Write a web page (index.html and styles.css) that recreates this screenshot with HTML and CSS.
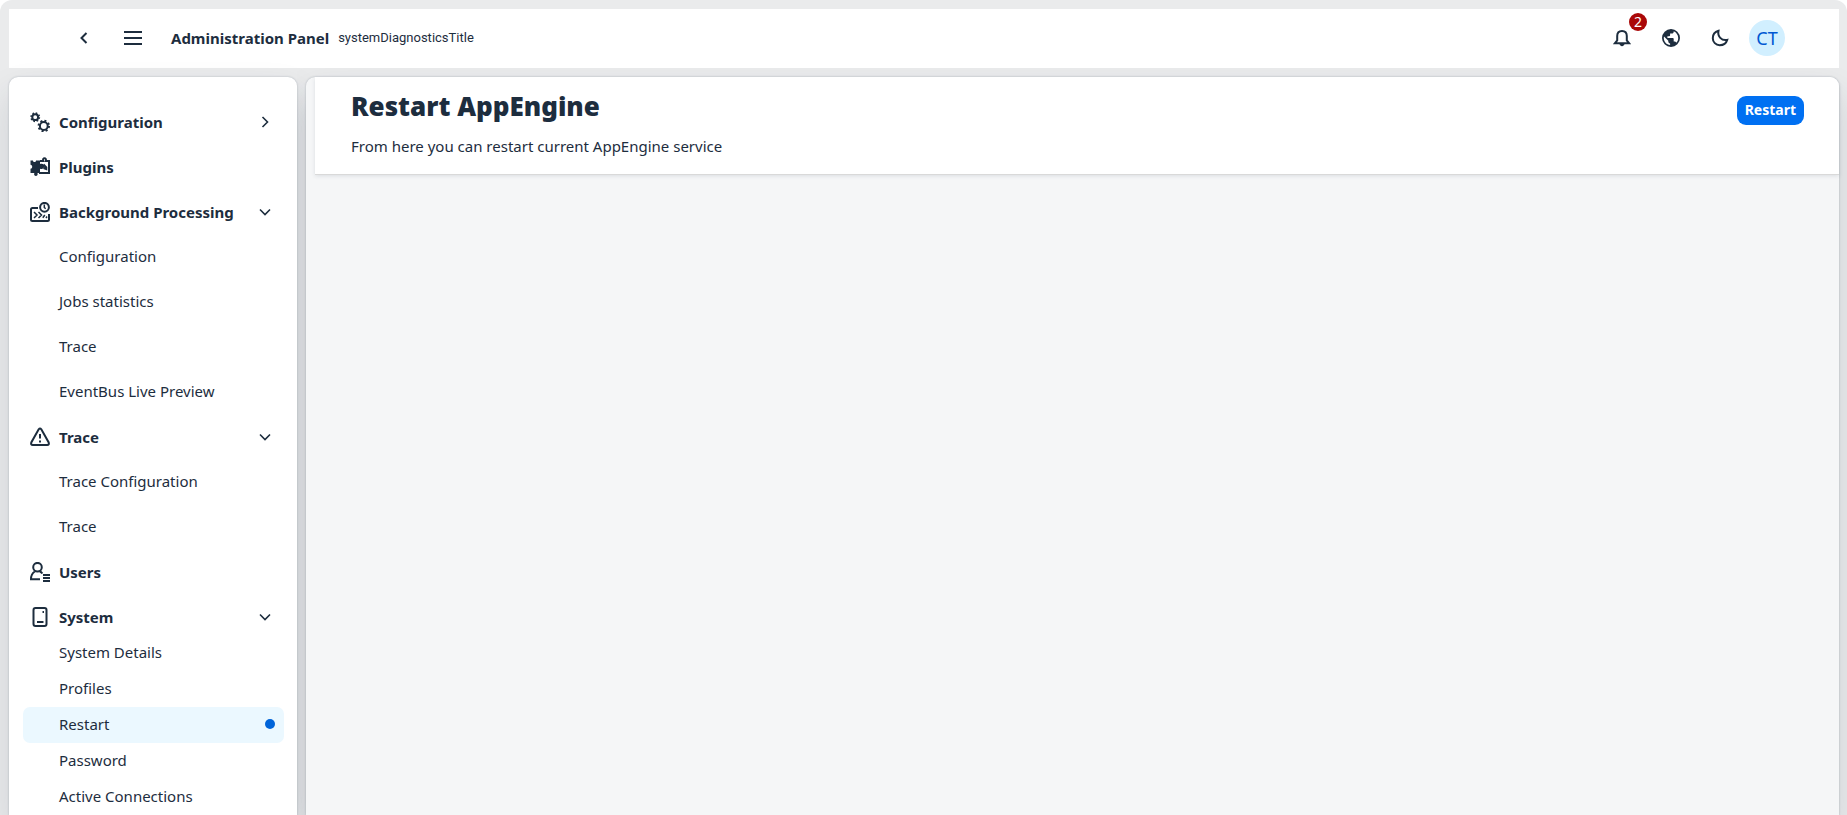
FILE: index.html
```html
<!DOCTYPE html>
<html lang="en">
<head>
<meta charset="utf-8">
<meta name="viewport" content="width=device-width, initial-scale=1">
<title>Administration Panel</title>
<link rel="stylesheet" href="styles.css">
</head>
<body>
<div class="shell">
  <header class="topbar">
    <button class="icon-btn back" aria-label="Back"><svg width="20" height="20" viewBox="0 0 20 20"><path d="M12.500 5 7.500 10l5 5"/></svg></button>
    <button class="icon-btn menu" aria-label="Menu"><svg width="20" height="20" viewBox="0 0 20 20"><path d="M1 4h18M1 10h18M1 16h18"/></svg></button>
    <strong class="brand">Administration Panel</strong>
    <span class="brand-sub">systemDiagnosticsTitle</span>
    <div class="actions">
      <button class="icon-btn bell" aria-label="Notifications"><svg width="18" height="18" viewBox="0 0 18 18"><path d="M2 14.200h14L13.800 11.500V7C13.800 4 12 2 9 2S4.200 4 4.200 7v4.500z"/><path class="solid" d="M6.500 15h5c-.3 1.300-1.300 2.200-2.500 2.200S6.800 16.300 6.500 15z"/></svg><span class="badge">2</span></button>
      <button class="icon-btn" aria-label="Language"><svg width="20" height="20" viewBox="0 0 20 20"><path class="solid" fill-rule="evenodd" d="M10 1a9 9 0 1 0 0 18 9 9 0 0 0 0-18zm-.9 16.100C5.500 16.700 2.800 13.700 2.800 10c0-.6.100-1.100.2-1.600l4.300 4.300v.9c0 1 .8 1.800 1.800 1.800zm6.200-2.300c-.2-.7-.9-1.300-1.700-1.300h-.9v-2.700c0-.5-.4-.9-.9-.9H6.400V8.200h1.800c.5 0 .9-.4.900-.9V5.500h1.800c1 0 1.800-.8 1.800-1.800v-.4c2.600 1.100 4.500 3.700 4.500 6.700 0 1.900-.7 3.600-1.900 4.800z"/></svg></button>
      <button class="icon-btn" aria-label="Dark mode"><svg width="18" height="18" viewBox="0 0 18 18"><path d="M7.500 1.800C3.900 2.800 1.800 5.800 1.800 9.200c0 3.900 3 7 6.900 7 3.400 0 6.500-1.900 7.500-5.300C10.500 12 6.300 7.500 7.500 1.800z"/></svg></button>
      <button class="avatar" aria-label="Profile">CT</button>
    </div>
  </header>
  <div class="body">
    <nav class="sidebar" aria-label="Administration">
      <ul class="nav">
        <li><a class="item group" href="#"><svg width="20" height="20" viewBox="0 0 20 20"><circle cx="5.200" cy="5.200" r="2.900"/><circle class="teeth small" cx="5.200" cy="5.200" r="4.200"/><circle cx="13.800" cy="14" r="3.900"/><circle class="teeth" cx="13.800" cy="14" r="5.200"/></svg><span>Configuration</span><svg class="chev" width="12" height="12" viewBox="0 0 12 12"><path d="M3.500 1 8.500 6l-5 5"/></svg></a></li>
        <li><a class="item group" href="#"><svg width="20" height="20" viewBox="0 0 20 20"><path class="solid" d="M.5 3.500H3c0 2 3 2 3 0h4v3.600c2.400-1 4.200.3 4.200 2.200s-1.800 3.300-4.200 2.400V16H7.500c.6 2.200-.5 3-1.600 3s-2.300-.8-1.600-3H.5v-4.200c2.300 0 2.300-4 0-4z"/><path d="M10 4h3.200c-.5-2 .4-2.800 1.300-2.800s1.800.8 1.300 2.800H19v12H9M13.500 7.500l2.800 3v1.500l-2.800-1"/></svg><span>Plugins</span></a></li>
        <li><a class="item group" href="#"><svg width="20" height="20" viewBox="0 0 20 20"><path d="M8 6H2.500Q1 6 1 7.500v10Q1 19 2.500 19h15q1.500 0 1.500-1.500V12"/><circle cx="14.500" cy="5.300" r="4.400"/><path class="fine" d="M14.300 2.500v3l1.400 1.300M4 10l3 3-3 3M8.500 10l3 3-3 3M12.800 15.800l2-2.800M16 16l1-1.500"/></svg><span>Background Processing</span><svg class="chev" width="12" height="12" viewBox="0 0 12 12"><path d="m1 3.500 5 5 5-5"/></svg></a>
          <ul class="sub">
            <li><a class="item" href="#">Configuration</a></li>
            <li><a class="item" href="#">Jobs statistics</a></li>
            <li><a class="item" href="#">Trace</a></li>
            <li><a class="item" href="#">EventBus Live Preview</a></li>
          </ul></li>
        <li><a class="item group" href="#"><svg width="20" height="20" viewBox="0 0 20 20"><path d="M8.700 2.300q1.300-1.600 2.600 0l7.400 13.200q.7 2.500-1.500 2.500H2.800q-2.200 0-1.500-2.500z"/><path d="M10 7v4.500M10 13.500v2"/></svg><span>Trace</span><svg class="chev" width="12" height="12" viewBox="0 0 12 12"><path d="m1 3.500 5 5 5-5"/></svg></a>
          <ul class="sub">
            <li><a class="item" href="#">Trace Configuration</a></li>
            <li><a class="item" href="#">Trace</a></li>
          </ul></li>
        <li><a class="item group" href="#"><svg width="20" height="20" viewBox="0 0 20 20"><circle cx="7.500" cy="5.200" r="4.300"/><path d="M4.800 9.500C2.500 10.800 1 13.500 1 17.300h9M10 9.500c1 .5 1.800 1.200 2.400 2M13 13h7M13 16h7M13 19h7"/></svg><span>Users</span></a></li>
        <li><a class="item group" href="#"><svg width="20" height="20" viewBox="0 0 20 20"><rect x="3.500" y="1" width="13" height="18" rx="2"/><path d="M7 15h6.500M12.500 5H14"/></svg><span>System</span><svg class="chev" width="12" height="12" viewBox="0 0 12 12"><path d="m1 3.500 5 5 5-5"/></svg></a>
          <ul class="sub tight">
            <li><a class="item" href="#">System Details</a></li>
            <li><a class="item" href="#">Profiles</a></li>
            <li><a class="item current" href="#" aria-current="page">Restart</a></li>
            <li><a class="item" href="#">Password</a></li>
            <li><a class="item" href="#">Active Connections</a></li>
          </ul></li>
      </ul>
    </nav>
    <main class="content">
      <section class="page-head">
        <div>
          <h1 class="title">Restart AppEngine</h1>
          <p class="lead">From here you can restart current AppEngine service</p>
        </div>
        <button class="primary">Restart</button>
      </section>
    </main>
  </div>
</div>
</body>
</html>
```
FILE: styles.css
```css
* { box-sizing: border-box; }
html { background: #fff; }
body {
  margin: 0;
  font: 15px/20px "Noto Sans", sans-serif;
  color: #1d2d3e;
}
button { font: inherit; color: inherit; border: 0; padding: 0; background: none; cursor: pointer; }
a { color: inherit; text-decoration: none; }
ul { list-style: none; margin: 0; padding: 0; }
svg { flex: none; display: block; fill: none; stroke: #1d2d3e; stroke-width: 2; }
svg .solid { fill: #1d2d3e; stroke: none; }
svg .fine { stroke-width: 1.500; }
svg .teeth { stroke-dasharray: 2 2.080; }
svg .teeth.small { stroke-width: 1.500; stroke-dasharray: 1.650 1.650; }

.shell {
  height: 100vh;
  display: flex;
  flex-direction: column;
  gap: 9px;
  padding: 9px 8px 0 9px;
  overflow: hidden;
  background: #eaebec;
  border-radius: 12px 12px 0 0;
}
.topbar {
  flex: none;
  height: 59px;
  display: flex;
  align-items: center;
  padding: 0 54px 2px 57px;
  background: #fff;
}
.icon-btn {
  position: relative;
  width: 36px;
  height: 36px;
  display: flex;
  align-items: center;
  justify-content: center;
}
.menu { margin: 0 20px 0 13px; }
.brand-sub { margin-left: 9px; font-family: Roboto, sans-serif; font-size: 13px; }
.actions { margin-left: auto; display: flex; align-items: center; gap: 13px; }
.badge {
  position: absolute;
  left: 25px;
  top: -7px;
  width: 18px;
  height: 18px;
  border-radius: 9px;
  background: #aa0808;
  color: #fff;
  font-size: 14px;
  line-height: 18px;
}
.avatar {
  width: 36px;
  height: 36px;
  margin-left: -2px;
  border-radius: 50%;
  background: #d1efff;
  color: #0057d2;
  font-size: 18px;
}
.body { flex: 1; min-height: 0; display: flex; gap: 9px; }
.sidebar {
  flex: none;
  width: 288px;
  padding: 27px 13px 0 14px;
  border-radius: 9px 9px 0 0;
  background: #fff;
  box-shadow: 0 0 2px rgba(34, 53, 72, .3), 0 18px 36px rgba(34, 53, 72, .14);
}
.nav, .sub { display: grid; gap: 9px; }
.sub { margin-top: 9px; }
.sub.tight { gap: 0; margin-top: 0; }
.item {
  height: 36px;
  display: flex;
  align-items: center;
  padding: 0 13px 2px 36px;
  border-radius: 7px;
}
.item.group { padding-left: 7px; padding-bottom: 1px; gap: 9px; font-weight: 700; }
.chev { margin-left: auto; stroke-width: 1.600; }
.current { padding-right: 9px; background: #ebf8ff; }
.current::after {
  content: "";
  width: 10px;
  height: 10px;
  margin-left: auto;
  border-radius: 50%;
  background: #0064d9;
}
.content {
  flex: 1;
  min-width: 0;
  padding-left: 9px;
  border-radius: 9px 9px 0 0;
  background: #f5f6f7;
  box-shadow: 0 0 2px rgba(34, 53, 72, .3), 0 18px 36px rgba(34, 53, 72, .14);
  clip-path: inset(-9px -9px 0 -9px);
}
.page-head {
  display: flex;
  align-items: flex-start;
  justify-content: space-between;
  padding: 12px 35px 18px 36px;
  border-radius: 0 9px 0 0;
  background: #fff;
  box-shadow: 0 1px 0 #d9d9d9, 0 2px 4px rgba(34, 53, 72, .12);
}
.title { margin: 0; font-size: 26px; line-height: 34px; font-weight: 900; }
.lead { margin: 13px 0 0; }
.primary {
  height: 29px;
  margin-top: 7px;
  padding: 0 8px 1px;
  border-radius: 9px;
  background: #0070f2;
  color: #fff;
  font-size: 14px;
  font-weight: 700;
}
```
